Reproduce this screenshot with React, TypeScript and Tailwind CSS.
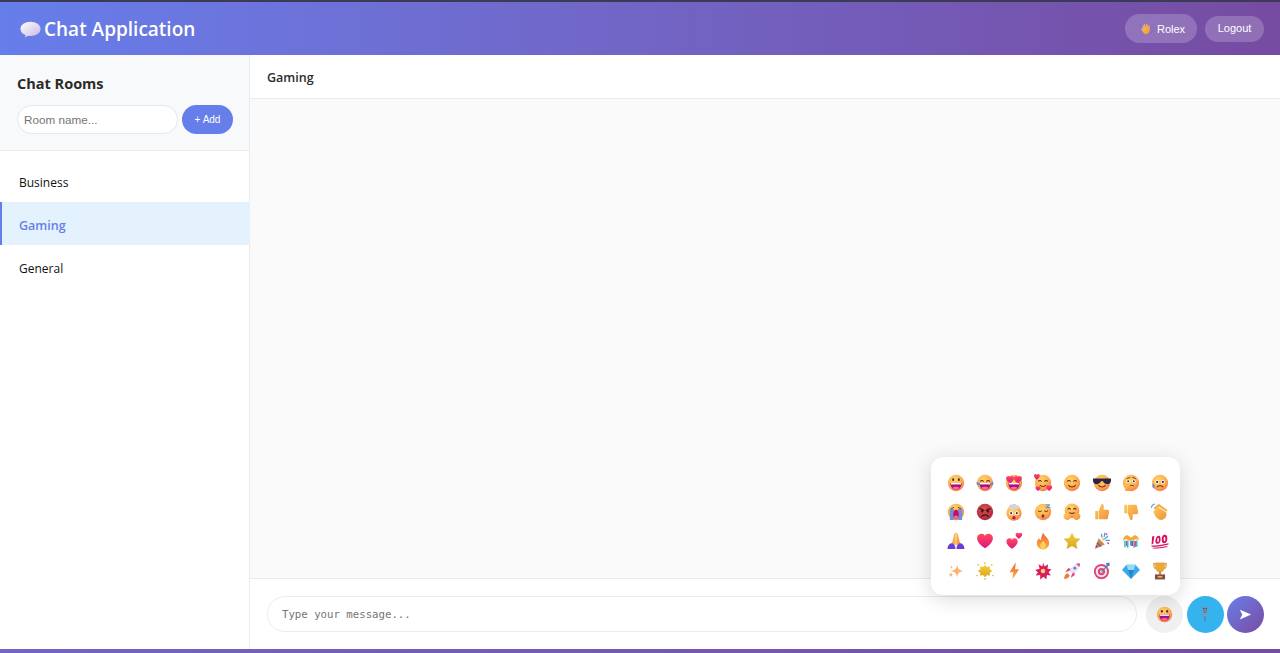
import type { ReactNode } from "react";

const Sv = ({ children, size = 18, className = "" }: { children: ReactNode; size?: number; className?: string }) => (
  <svg viewBox="0 0 32 32" width={size} height={size} className={className}>
    {children}
  </svg>
);

const defs = (
  <svg width="0" height="0" className="absolute">
    <defs>
      <radialGradient id="face" cx="0.4" cy="0.3" r="0.8">
        <stop offset="0" stopColor="#ffd56a" />
        <stop offset="0.55" stopColor="#fdb04c" />
        <stop offset="1" stopColor="#f0704a" />
      </radialGradient>
      <radialGradient id="redface" cx="0.45" cy="0.35" r="0.75">
        <stop offset="0" stopColor="#e0524a" />
        <stop offset="1" stopColor="#a81f3c" />
      </radialGradient>
      <linearGradient id="hand" x1="0" y1="0" x2="1" y2="1">
        <stop offset="0" stopColor="#ffcb5c" />
        <stop offset="1" stopColor="#f0913c" />
      </linearGradient>
      <linearGradient id="heart" x1="0" y1="0" x2="0" y2="1">
        <stop offset="0" stopColor="#ff4a5e" />
        <stop offset="1" stopColor="#e0157a" />
      </linearGradient>
      <linearGradient id="flame" x1="0" y1="0" x2="0" y2="1">
        <stop offset="0" stopColor="#f2603a" />
        <stop offset="1" stopColor="#fdb33f" />
      </linearGradient>
      <linearGradient id="gold" x1="0" y1="0" x2="0" y2="1">
        <stop offset="0" stopColor="#f6d13f" />
        <stop offset="1" stopColor="#d9a421" />
      </linearGradient>
      <linearGradient id="bubble" x1="0" y1="0" x2="1" y2="1">
        <stop offset="0" stopColor="#ffffff" />
        <stop offset="1" stopColor="#cdb8e4" />
      </linearGradient>
    </defs>
  </svg>
);

const Face = ({ children, fill = "url(#face)" }: { children?: ReactNode; fill?: string }) => (
  <>
    <circle cx="16" cy="16" r="14.5" fill={fill} />
    {children}
  </>
);

const Heart = ({ x = 0, y = 0, s = 1 }: { x?: number; y?: number; s?: number }) => (
  <path
    transform={`translate(${x} ${y}) scale(${s})`}
    d="M16 29C9 24 2 18 2 11c0-5 4-8 8-8 3 0 5 1.5 6 4 1-2.5 3-4 6-4 4 0 8 3 8 8 0 7-7 13-14 18z"
    fill="url(#heart)"
  />
);

const smileEyes = <path d="M8 13c1-2 4-2 5 0M19 13c1-2 4-2 5 0" stroke="#5b2a2a" strokeWidth="1.8" fill="none" strokeLinecap="round" />;
const openMouth = (
  <>
    <path d="M6 16h20c0 7-4 12-10 12S6 23 6 16z" fill="#a8108a" />
    <path d="M10 24c3-2 9-2 12 0-1.5 2.7-3.5 4-6 4s-4.5-1.3-6-4z" fill="#ff6a8a" />
    <path d="M7 16h18v2.5H7z" fill="#fff" />
  </>
);
const smile = <path d="M10 20c2 4 10 4 12 0" stroke="#6b2d2d" strokeWidth="1.8" fill="none" strokeLinecap="round" />;

const GrinFace = () => (
  <Face>
    <ellipse cx="11" cy="10" rx="1.8" ry="2.5" fill="#4a2a3a" />
    <ellipse cx="21" cy="10" rx="1.8" ry="2.5" fill="#4a2a3a" />
    {openMouth}
  </Face>
);

const emojis: ReactNode[] = [
  <GrinFace />,
  <Face>
    {smileEyes}
    {openMouth}
    <path d="M1 15c3-1 5 1 6 4-3 2-7 0-6-4zM31 15c-3-1-5 1-6 4 3 2 7 0 6-4z" fill="#5b8fe0" />
  </Face>,
  <Face>
    <Heart x={1} y={2} s={0.5} />
    <Heart x={15} y={2} s={0.5} />
    {openMouth}
  </Face>,
  <Face>
    {smileEyes}
    <path d="M11 20c2 3 8 3 10 0" stroke="#6b2d2d" strokeWidth="1.8" fill="none" strokeLinecap="round" />
    <Heart x={-1} y={-1} s={0.38} />
    <Heart x={21} y={19} s={0.38} />
    <Heart x={2} y={21} s={0.32} />
  </Face>,
  <Face>
    {smileEyes}
    {smile}
  </Face>,
  <Face>
    <path d="M0 8h32v4c0 4-3 6-7 6s-6-2-7-5h-4c-1 3-3 5-7 5s-7-2-7-6z" fill="#2a2547" />
    {smile}
  </Face>,
  <Face>
    <path d="M9 8l5-1.5M19 6l5 2" stroke="#6b2d2d" strokeWidth="1.6" strokeLinecap="round" />
    <circle cx="11" cy="13" r="3.2" fill="#fff" />
    <circle cx="21" cy="13" r="3.2" fill="#fff" />
    <circle cx="11" cy="13" r="1.8" fill="#4a2a3a" />
    <circle cx="21" cy="13" r="1.8" fill="#4a2a3a" />
    <path d="M14 21c2-1 5-1 7 0" stroke="#6b2d2d" strokeWidth="1.6" fill="none" />
    <path d="M4 20c3-1 7 0 9 3l-1 7H6z" fill="url(#hand)" />
  </Face>,
  <Face>
    <circle cx="11" cy="14" r="3.5" fill="#fff" />
    <circle cx="21" cy="14" r="3.5" fill="#fff" />
    <circle cx="11" cy="14" r="2" fill="#4a2a3a" />
    <circle cx="21" cy="14" r="2" fill="#4a2a3a" />
    <path d="M11 23c2-3 8-3 10 0" stroke="#6b2d2d" strokeWidth="1.8" fill="none" strokeLinecap="round" />
    <path d="M4 17c2 3 4 5 2 8-3 1-5-3-2-8z" fill="#5b8fe0" />
  </Face>,
  <Face>
    <path d="M5 10h7v20H5zM20 10h7v20h-7z" fill="#6f8fe0" />
    <path d="M8 10l4-2M20 8l4 2" stroke="#6b2d2d" strokeWidth="1.6" strokeLinecap="round" />
    <ellipse cx="16" cy="20" rx="5" ry="8" fill="#c0116a" />
    <ellipse cx="16" cy="25" rx="3.5" ry="3" fill="#ff6a8a" />
  </Face>,
  <Face fill="url(#redface)">
    <path d="M7 10l7 3M25 10l-7 3" stroke="#4a1020" strokeWidth="2.2" strokeLinecap="round" />
    <circle cx="11" cy="15" r="2" fill="#2a1020" />
    <circle cx="21" cy="15" r="2" fill="#2a1020" />
    <path d="M10 24c3-4 9-4 12 0" stroke="#2a1020" strokeWidth="2" fill="none" strokeLinecap="round" />
  </Face>,
  <>
    <circle cx="16" cy="18" r="13.5" fill="url(#face)" />
    <path d="M8 10c-4-4 1-9 5-7 2-3 7-2 8 1 4-1 7 4 3 6-3 3-13 4-16 0z" fill="#d8d3cc" />
    <circle cx="11" cy="18" r="3.5" fill="#fff" />
    <circle cx="21" cy="18" r="3.5" fill="#fff" />
    <circle cx="11" cy="18" r="1.8" fill="#4a2a3a" />
    <circle cx="21" cy="18" r="1.8" fill="#4a2a3a" />
    <ellipse cx="16" cy="26" rx="3" ry="3" fill="#c0116a" />
  </>,
  <Face>
    <path d="M8 14c1 2 4 2 5 0M19 14c1 2 4 2 5 0" stroke="#5b2a2a" strokeWidth="1.8" fill="none" strokeLinecap="round" />
    <ellipse cx="16" cy="23" rx="2.5" ry="3" fill="#8a2244" />
    <path d="M21 3h7l-6 5h7" stroke="#4fa3c7" strokeWidth="2" fill="none" strokeLinejoin="round" />
  </Face>,
  <>
    <circle cx="16" cy="14" r="13" fill="url(#face)" />
    <path d="M9 11c1-2 3-2 4 0M19 11c1-2 3-2 4 0" stroke="#5b2a2a" strokeWidth="1.8" fill="none" strokeLinecap="round" />
    <path d="M12 17c2 2 6 2 8 0" stroke="#6b2d2d" strokeWidth="1.8" fill="none" strokeLinecap="round" />
    <path d="M1 23c0-4 5-6 8-4l4 5c1 3-1 6-4 6-4 0-8-2-8-7zM31 23c0-4-5-6-8-4l-4 5c-1 3 1 6 4 6 4 0 8-2 8-7z" fill="url(#hand)" />
  </>,
  <path d="M15 2c2-1 4 0 4 3v7h7c2 0 3 2 2.5 4l-2 11c-.5 1.5-1.5 2-3 2H13c-2 0-3-1-3-3V14zM4 14h5v15H4z" fill="url(#hand)" />,
  <path d="M15 30c2 1 4 0 4-3v-7h7c2 0 3-2 2.5-4l-2-11c-.5-1.5-1.5-2-3-2H13c-2 0-3 1-3 3v12zM4 18h5V3H4z" fill="url(#hand)" />,
  <>
    <path d="M4 15l8-8 15 10c2 6-2 13-9 13-6 0-10-5-14-15z" fill="url(#hand)" />
    <path d="M7 9l7-5 13 9" stroke="#f5b04c" strokeWidth="4" fill="none" strokeLinecap="round" />
    <path d="M1 8c0-2 2-5 5-6" stroke="#5ba6e8" strokeWidth="2" fill="none" strokeLinecap="round" />
  </>,
  <>
    <path d="M15.5 1c-2 0-3 3-4 8l-3 12 7 2zM16.5 1c2 0 3 3 4 8l3 12-7 2z" fill="url(#hand)" />
    <path d="M1 30c0-6 4-10 7-10s7 3 7 10zM31 30c0-6-4-10-7-10s-7 3-7 10z" fill="#6a3fd6" />
  </>,
  <Heart />,
  <>
    <Heart x={1} y={9} s={0.72} />
    <Heart x={18} y={0} s={0.42} />
  </>,
  <>
    <path d="M16 1c2 6 11 10 11 19 0 6-5 11-11 11S5 26 5 20c0-4 2-7 4-9 1 2 2 3 3 3 1-4 2-8 4-13z" fill="url(#flame)" />
    <path d="M16 15c2 3 5 5 5 9 0 3-2 6-5 6s-5-3-5-6c0-4 4-5 5-9z" fill="#ffcf5c" />
  </>,
  <path d="M16 1l4.8 9.5 10.2 1.5-7.5 7.5 2 10.5L16 25l-9.500 5 2-10.500L1 12l10.200-1.500z" fill="url(#gold)" />,
  <>
    <path d="M3 30L10 11l11 11z" fill="#c98a4a" />
    <path d="M7 19l7 7M5 24l3 3" stroke="#7a4bb0" strokeWidth="2.5" />
    <path d="M15 4l1 5M21 2l-1 6M26 8l-5 4M29 15h-6" stroke="#3fa3d9" strokeWidth="2.2" strokeLinecap="round" />
    <circle cx="24" cy="4" r="1.8" fill="#e0477a" />
    <circle cx="18" cy="13" r="1.8" fill="#f2b43c" />
    <circle cx="27" cy="20" r="1.8" fill="#e0477a" />
  </>,
  <>
    <path d="M2 15c0-6 4-10 9-9l5 4 5-4c5-1 9 3 9 9-3-3-7-3-10 0h-8c-3-3-7-3-10 0z" fill="#f5a93c" />
    <path d="M4 15h2.5v12H4zM9 15h2.5v13H9zM14 15h2.5v9H14zM20 15h2.5v13H20zM25 15h2.5v11H25z" fill="#2fb7c9" />
    <path d="M7 16h2v9H7zM22 16h3v10h-3z" fill="#e0477a" />
    <path d="M16.5 16h3v9h-3z" fill="#7a4bb0" />
  </>,
  <>
    <g fill="#d8115f">
      <path d="M2 8l4-1-2 14-3 1zM12 7c4-1 5 1 5 6s-2 8-5 8-5-2-4-7 2-6 4-7zM23 5c4-1 6 1 6 6s-2 8-5 9-5-2-5-7 2-7 4-8z" />
      <path d="M1 24c9 0 19-1 30-4v2c-10 3-20 4-30 4zM3 28c8 0 17-1 26-3v1.5c-8 2-17 3-26 3z" />
    </g>
    <ellipse cx="12.5" cy="14" rx="1.5" ry="4" fill="#fff" />
    <ellipse cx="24" cy="12.5" rx="1.5" ry="4" fill="#fff" />
  </>,
  <>
    <path d="M18 4c1 8 3 11 12 12-9 1-11 4-12 12-1-8-3-11-12-12 9-1 11-4 12-12z" fill="#fbb26a" />
    <path d="M7 18c.5 3 1.5 4 4.5 4.5-3 .5-4 1.5-4.500 4.500-.5-3-1.500-4-4.500-4.500 3-.5 4-1.500 4.500-4.500zM8 6c.4 2 1 2.600 3 3-2 .4-2.600 1-3 3-.4-2-1-2.600-3-3 2-.4 2.600-1 3-3z" fill="#f9a76c" />
  </>,
  <>
    <path d="M16 5l3.500 4 5-1.500 0 5.500 4.500 3-4.500 3 0 5.500-5-1.500-3.500 4-3.500-4-5 1.500 0-5.500L3 16l4.500-3 0-5.500 5 1.500z" fill="url(#gold)" />
    <circle cx="16" cy="2" r="1.5" fill="#e8bd3c" />
    <circle cx="16" cy="30" r="1.5" fill="#e8bd3c" />
    <circle cx="2" cy="24" r="1.5" fill="#e8bd3c" />
    <circle cx="30" cy="24" r="1.5" fill="#e8bd3c" />
    <circle cx="4" cy="5" r="1.5" fill="#e8bd3c" />
    <circle cx="28" cy="5" r="1.5" fill="#e8bd3c" />
  </>,
  <path d="M19 1L8 18h7l-2 13 12-18h-7z" fill="url(#flame)" />,
  <>
    <path d="M16 1l3 7 6-4-1 8 7 1-5 5 4 6-7-1-1 8-5-5-6 5v-8l-8 1 4-6-5-4 8-2-2-8 7 4z" fill="#d81e5b" />
    <circle cx="16" cy="16" r="4" fill="#ffd36a" />
  </>,
  <>
    <path d="M11 16C15 8 21 3 30 2c0 9-5 15-13 19z" fill="#e8e4f0" />
    <path d="M23 3l7-1-.5 7z" fill="#e0477a" />
    <circle cx="21" cy="11" r="2.5" fill="#5f7fd9" />
    <path d="M11 16l-7 2 5-7 5 1zM16 21l-2 7 7-5-1-5z" fill="#e0477a" />
    <path d="M8 20c-4 1-6 5-6 10 5 0 9-2 10-6z" fill="#f47a3c" />
  </>,
  <>
    <circle cx="15" cy="17" r="13.5" fill="#d84a7a" />
    <circle cx="15" cy="17" r="10" fill="#f8e8ee" />
    <circle cx="15" cy="17" r="6.5" fill="#d84a7a" />
    <circle cx="15" cy="17" r="2.5" fill="#f8e8ee" />
    <path d="M15 17L27 5" stroke="#3f7fc9" strokeWidth="2" />
    <path d="M23 2l6-1 1 5-5 2z" fill="#3f7fc9" />
  </>,
  <>
    <path d="M8 5h16l8 9-16 16L0 14z" fill="#3fa9e8" />
    <path d="M8 5h16l-3 9H11z" fill="#8fdcf8" />
    <path d="M11 14h10l-5 16z" fill="#1f88d4" />
  </>,
  <>
    <path d="M5 3h4v8H7C5 11 5 7 5 3zM27 3h-4v8h2c2 0 2-4 2-8z" stroke="#dd9a3c" strokeWidth="2.2" fill="none" />
    <path d="M8 1h16v9c0 5-3 8-8 8s-8-3-8-8z" fill="#e9a83a" />
    <path d="M14 17h4v5h-4z" fill="#d08a2c" />
    <path d="M7 22h18v9H7z" fill="#8a4a44" />
    <path d="M12 25h8v2.5h-8z" fill="#e9c06a" />
  </>,
];

const Wave = () => (
  <Sv size={13}>
    <path d="M9 15l-3-6c-1-2 2-3 3-1l3 5 0-1-3-7c-1-2 2-3 3-1l4 7-1-8c0-2 3-2 3 0l2 8 1-5c.5-2 3-1.5 3 .5v11c0 7-4 10-9 10-4 0-6-2-8-6l-4-6c-1-2 1-3 3-2z" fill="url(#hand)" />
    <path d="M3 3c-1 1-2 3-2 5M28 24c1-1 2-3 2-5" stroke="#3f7fc9" strokeWidth="1.8" fill="none" strokeLinecap="round" />
  </Sv>
);

const Mic = () => (
  <Sv size={18}>
    <rect x="10.5" y="2" width="11" height="18" rx="5.5" fill="#6f9cc0" />
    <path d="M13 7h6M13 10h6M13 13h6" stroke="#3d6c90" strokeWidth="1.2" />
    <circle cx="13.5" cy="6" r="1.2" fill="#2c4f6b" />
    <circle cx="18.5" cy="6" r="1.2" fill="#2c4f6b" />
    <path d="M16 20v9" stroke="#5d88a8" strokeWidth="3" />
  </Sv>
);

const rooms = ["Business", "Gaming", "General"];

export default function App() {
  return (
    <div className="h-[653px] overflow-hidden bg-gradient-to-br from-[#667eea] to-[#764ba2] font-['Open_Sans','Noto_Sans',sans-serif]">
      {defs}
      <div className="h-[2px] bg-[#3b3a57]" />
      <div className="flex h-[647px] flex-col bg-white">
        <header className="flex h-[53px] items-center justify-between bg-gradient-to-r from-[#667eea] to-[#764ba2] pl-5 pr-4 text-white">
          <h1 className="flex items-center gap-[3px] pt-[2px] text-[19px] font-semibold">
            <Sv size={21}>
              <ellipse cx="16" cy="15" rx="15.5" ry="11" fill="url(#bubble)" />
              <path d="M10 22l-3 6 8-4z" fill="#e5d9ef" />
            </Sv>
            Chat Application
          </h1>
          <div className="flex items-center gap-2">
            <div className="flex h-[29px] w-[72px] items-center justify-center gap-[4px] rounded-full bg-white/20 pt-[1px] pl-[3px] font-['Liberation_Sans',sans-serif] text-[11px]">
              <Wave />
              Rolex
            </div>
            <button className="h-[26px] w-[59px] rounded-full bg-white/20 pb-[1px] font-['Liberation_Sans',sans-serif] text-[11px]">Logout</button>
          </div>
        </header>
        <div className="flex min-h-0 flex-1">
          <aside className="flex w-[250px] flex-col border-r border-[#e9ecef]">
            <div className="h-[96px] border-b border-[#e9ecef] bg-[#f8f9fa] pt-[19px] pr-4 pl-[17px]">
              <h3 className="text-[14.5px] leading-5 font-bold text-[#2b2b2b]">Chat Rooms</h3>
              <div className="mt-[11px] flex gap-[4px]">
                <input
                  placeholder="Room name..."
                  className="h-[29px] w-[161px] rounded-full border border-[#e5e7eb] bg-white px-[6px] font-['Liberation_Sans',sans-serif] text-[11.7px] placeholder:text-[#757575]"
                />
                <button className="h-[29px] w-[51px] rounded-full bg-[#667eea] font-['Liberation_Sans',sans-serif] text-[10px] text-white">+ Add</button>
              </div>
            </div>
            <ul className="pt-[8px]">
              {rooms.map((room) => (
                <li
                  key={room}
                  className={
                    room === "Gaming"
                      ? "-mr-px flex h-[43px] items-center border-l-2 border-[#667eea] bg-[#e3f2fd] pt-[5px] pl-[17px] text-[12.5px] font-semibold text-[#667eea]"
                      : "flex h-[43px] items-center pt-[5px] pl-[19px] text-xs text-[#111]"
                  }
                >
                  {room}
                </li>
              ))}
            </ul>
          </aside>
          <main className="relative flex min-w-0 flex-1 flex-col">
            <div className="flex h-[44px] items-center border-b border-[#e9ecef] px-[17px] pt-[4px] text-[12.5px] font-semibold text-[#2b2b2b]">Gaming</div>
            <div className="flex-1 bg-[#fafafa]" />
            <div className="flex h-[71px] items-center gap-[9px] border-t border-[#e9ecef] pr-4 pl-[17px]">
              <input
                placeholder="Type your message..."
                className="h-[36px] min-w-0 flex-1 rounded-full border border-[#e9ecef] bg-white px-[14px] font-['DejaVu_Sans_Mono',monospace] text-[10.7px] placeholder:text-[#757575]"
              />
              <div className="flex gap-[3.5px]">
                <button className="flex size-[37px] items-center justify-center rounded-full bg-[#f0f0f0]">
                  <Sv size={17}>
                    <GrinFace />
                  </Sv>
                </button>
                <button className="flex size-[37px] items-center justify-center rounded-full bg-[#35b3ee]">
                  <Mic />
                </button>
                <button className="flex size-[37px] items-center justify-center rounded-full bg-gradient-to-br from-[#667eea] to-[#764ba2]">
                  <svg viewBox="0 0 16 16" width="13" height="13">
                    <path d="M1 2l14 6-14 6 3-6z" fill="#fff" />
                  </svg>
                </button>
              </div>
            </div>
            <div className="absolute top-[402px] right-[100px] grid h-[138px] w-[249px] grid-cols-[repeat(8,29.2px)] content-start rounded-xl bg-white pt-[11px] pl-[10px] shadow-[0_4px_20px_rgba(0,0,0,0.15)]">
              {emojis.map((emoji, i) => (
                <div key={i} className="flex h-[29.4px] items-center justify-center">
                  <Sv>{emoji}</Sv>
                </div>
              ))}
            </div>
          </main>
        </div>
      </div>
    </div>
  );
}
